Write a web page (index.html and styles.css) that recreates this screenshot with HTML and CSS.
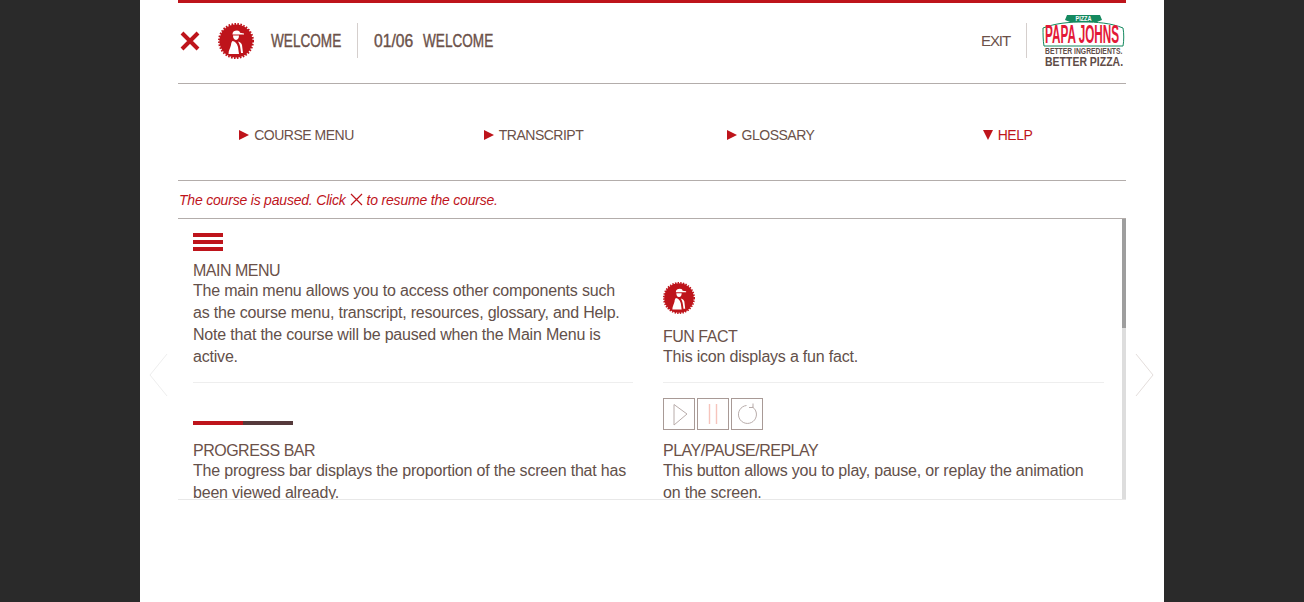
FILE: index.html
```html
<!DOCTYPE html>
<html lang="en">
<head>
    <meta charset="UTF-8">
    <meta name="viewport" content="width=device-width, initial-scale=1.0">
    <title>Welcome</title>
    <link rel="stylesheet" href="styles.css">
</head>
<body>
    <svg class="defs" width="0" height="0">
        <symbol id="pizza-badge" viewBox="0 0 36 36">
            <circle cx="18" cy="18" r="16.6" fill="#be141b"/>
            <circle cx="18" cy="18" r="17" fill="none" stroke="#be141b" stroke-width="2" stroke-dasharray="1.6 1.4"/>
            <path d="M14.5 11 C14.5 8.5 16.5 7.5 19 7.5 C21 7.5 22 8.5 22 9.8 L26 10.5 V11.6 H14.5 Z" fill="#fff"/>
            <path d="M15 12.6 H21 C21 15 20 17 18 17 C16 17 15 15 15 12.6 Z" fill="#fff"/>
            <path d="M14.5 18 C17 18.5 19 20 20 24 L21 31 H10.5 C10.5 27 12.5 25 13 22 C13.2 20 13.5 19 14.5 18 Z" fill="#fff"/>
            <path d="M20 18.5 C22 19 23.5 20 24 22 L25 30 H23 C22.5 25 22 21 20 18.5 Z" fill="#fff"/>
        </symbol>
    </svg>

    <div class="stage">
        <svg class="side-arrow side-arrow-left" width="20" height="44" viewBox="0 0 20 44"><path d="M18 1 L1 22 L18 43" fill="none" stroke="#eeeeee" stroke-width="1"/></svg>
        <svg class="side-arrow side-arrow-right" width="20" height="44" viewBox="0 0 20 44"><path d="M1 1 L18 22 L1 43" fill="none" stroke="#e4dedc" stroke-width="1"/></svg>

        <header class="top-bar">
            <svg class="close-icon" width="20" height="20" viewBox="0 0 20 20"><path d="M2 2 L18 18 M18 2 L2 18" stroke="#be141b" stroke-width="4" fill="none"/></svg>
            <svg class="badge" width="36" height="36"><use href="#pizza-badge"/></svg>
            <div class="module-name"><span class="narrow">WELCOME</span></div>
            <div class="screen-name">
                <span class="screen-num">01/06</span>
                <span class="narrow">WELCOME</span>
            </div>
            <a class="exit-link">EXIT</a>
            <svg class="logo" width="86" height="54" viewBox="0 0 86 54">
                <path d="M1 15 C14 10 28 9 41 9 C55 9 69 10 81 15 C82 20 82 28 81 33 H2 C1 28 1 20 1 15 Z" fill="#fff" stroke="#14895f" stroke-width="1"/>
                <path d="M25 2 H58 L60 7 L55 9 H28 L23 7 Z" fill="#14895f"/>
                <g transform="translate(41.5 7.5) scale(0.8 1)"><text class="logo-pizza" text-anchor="middle">PIZZA</text></g>
                <g transform="translate(3 30) scale(0.47 1)"><text class="logo-name">PAPA JOHNS</text></g>
                <g transform="translate(3 41) scale(0.8 1)"><text class="logo-tag">BETTER INGREDIENTS.</text></g>
                <g transform="translate(3 53) scale(0.84 1)"><text class="logo-line">BETTER PIZZA.</text></g>
            </svg>
        </header>

        <nav class="main-nav">
            <a class="nav-item"><i class="tri"></i>COURSE MENU</a>
            <a class="nav-item"><i class="tri"></i>TRANSCRIPT</a>
            <a class="nav-item"><i class="tri"></i>GLOSSARY</a>
            <a class="nav-item nav-item-active"><i class="tri-down"></i>HELP</a>
        </nav>

        <p class="paused-note">The course is paused. Click
            <svg width="13" height="13" viewBox="0 0 13 13"><path d="M1 1 L12 12 M12 1 L1 12" stroke="#be141b" stroke-width="1.2" fill="none"/></svg>
            to resume the course.</p>

        <div class="help-panel">
            <div class="help-scroll">
                <section class="help-row">
                    <div class="help-cell">
                        <div class="menu-icon"><i></i><i></i><i></i></div>
                        <h3>MAIN MENU</h3>
                        <p>The main menu allows you to access other components such as the course menu, transcript, resources, glossary, and Help. Note that the course will be paused when the Main Menu is active.</p>
                    </div>
                    <div class="help-cell">
                        <svg class="fact-icon" width="32" height="32"><use href="#pizza-badge"/></svg>
                        <h3>FUN FACT</h3>
                        <p>This icon displays a fun fact.</p>
                    </div>
                </section>
                <section class="help-row">
                    <div class="help-cell">
                        <div class="progress-sample"><i></i></div>
                        <h3>PROGRESS BAR</h3>
                        <p>The progress bar displays the proportion of the screen that has been viewed already.</p>
                    </div>
                    <div class="help-cell">
                        <div class="player-btns">
                            <span class="player-btn"><svg width="30" height="30" viewBox="0 0 30 30"><path d="M10 5.5 L23 15 L10 26 Z" fill="none" stroke="#b8acaa"/></svg></span>
                            <span class="player-btn"><svg width="30" height="30" viewBox="0 0 30 30"><path d="M11.5 5 V25 M18.5 5 V25" fill="none" stroke="#f6c4bc" stroke-width="1.4"/></svg></span>
                            <span class="player-btn"><svg width="30" height="30" viewBox="0 0 30 30"><path d="M20.5 8 A9 9 0 1 1 14.5 6.5" fill="none" stroke="#b8acaa"/><path d="M21 4.5 V8.5 H17" fill="none" stroke="#b8acaa"/></svg></span>
                        </div>
                        <h3>PLAY/PAUSE/REPLAY</h3>
                        <p>This button allows you to play, pause, or replay the animation on the screen.</p>
                    </div>
                </section>
            </div>
            <div class="scroll-track"><div class="scroll-thumb"></div></div>
        </div>
    </div>
</body>
</html>
```
FILE: styles.css
```css
body {
    margin: 0;
    height: 100vh;
    overflow: hidden;
    display: flex;
    justify-content: center;
    background-color: #2a2a2a;
    font-family: "Liberation Sans", Arial, sans-serif;
    color: #63504a;
}
.defs {
    position: absolute;
}
.stage {
    position: relative;
    width: 948px;
    padding: 0 38px;
    background-color: #fff;
}
.side-arrow {
    position: absolute;
    top: 353px;
}
.side-arrow-left {
    left: 9px;
}
.side-arrow-right {
    right: 9px;
}
.top-bar {
    display: flex;
    align-items: center;
    height: 80px;
    border-top: 3px solid #be141b;
    border-bottom: 1px solid #b3adab;
}
.close-icon {
    margin: -5px 18px 0 2px;
}
.badge {
    margin-top: -5px;
    margin-right: 17px;
}
/* no condensed face installed, so squeeze the regular one */
.narrow, .screen-num {
    display: inline-block;
    transform-origin: left center;
    transform: scaleX(0.755);
    -webkit-text-stroke: 0.4px #6b5149;
}
.screen-num {
    width: 49px;
    transform: scaleX(0.87);
}
.module-name, .screen-name {
    font-size: 18px;
    color: #6b5149;
    margin-top: -5px;
}
.module-name {
    width: 86px;
    line-height: 35px;
    white-space: nowrap;
    border-right: 1px solid #d5cfcd;
}
.module-name .narrow, .screen-name span {
    position: relative;
    top: 1px;
}
.screen-name {
    display: flex;
    margin-left: 16px;
    flex: 1;
}
.exit-link {
    font-size: 15px;
    letter-spacing: -1.1px;
    color: #6b5149;
    width: 45px;
    line-height: 35px;
    border-right: 1px solid #d5cfcd;
    margin-top: -5px;
}
.logo {
    margin: -7px -2px 0 15px;
    align-self: center;
}
.logo text {
    font-weight: bold;
}
.logo-pizza {
    font-size: 7px;
    fill: #fff;
}
.logo-name {
    font-size: 25px;
    fill: #e31837;
}
.logo-tag {
    font-size: 8.5px;
    fill: #5f4c47;
}
.logo-line {
    font-size: 12.5px;
    fill: #5f4c47;
}
.main-nav {
    display: grid;
    grid-template-columns: repeat(4, 1fr);
    align-items: center;
    height: 90px;
    padding-top: 6px;
    border-bottom: 1px solid #b3adab;
}
.nav-item {
    display: flex;
    justify-content: center;
    align-items: center;
    gap: 5px;
    font-size: 14px;
    letter-spacing: -0.5px;
    color: #6b5149;
}
.nav-item-active {
    color: #be141b;
}
.tri {
    border-left: 10px solid #be141b;
    border-top: 5px solid transparent;
    border-bottom: 5px solid transparent;
}
.tri-down {
    border-top: 10px solid #be141b;
    border-left: 5.5px solid transparent;
    border-right: 5.5px solid transparent;
}
.paused-note {
    margin: 0;
    height: 37px;
    padding-left: 1px;
    display: flex;
    align-items: center;
    gap: 4px;
    font-size: 14px;
    font-style: italic;
    letter-spacing: -0.2px;
    color: #be141b;
}
.help-panel {
    display: flex;
    height: 280px;
    border-top: 1px solid #b3adab;
    border-bottom: 1px solid #e8e8e8;
}
.help-scroll {
    flex: 1;
    overflow: hidden;
}
.help-row {
    display: grid;
    grid-template-columns: 440px 441px;
    column-gap: 30px;
    padding-left: 15px;
}
.help-cell {
    display: flex;
    flex-direction: column;
    justify-content: flex-end;
}
.help-row:first-child .help-cell {
    height: 163px;
    border-bottom: 1px solid #eeeeee;
}
.help-row:last-child .help-cell {
    height: 135px;
    justify-content: flex-start;
}
.help-cell h3 {
    margin: 0;
    font-size: 16px;
    font-weight: normal;
    line-height: 20px;
    letter-spacing: -0.5px;
    color: #6b5149;
}
.help-cell p {
    margin: -1px 0 14px;
    font-size: 16px;
    line-height: 22px;
    letter-spacing: -0.2px;
}
.menu-icon {
    display: flex;
    flex-direction: column;
    gap: 3px;
    width: 30px;
    margin-bottom: 10px;
}
.menu-icon i {
    height: 4px;
    background-color: #be141b;
}
.fact-icon {
    margin-bottom: 13px;
}
.progress-sample {
    flex: none;
    width: 100px;
    height: 4px;
    margin: 38px 0 16px;
    background-color: #55393b;
}
.progress-sample i {
    display: block;
    width: 50%;
    height: 100%;
    background-color: #be141b;
}
.player-btns {
    display: flex;
    gap: 2px;
    margin: 15px 0 11px;
}
.player-btn {
    display: block;
    width: 30px;
    height: 30px;
    border: 1px solid #a89a96;
}
.player-btn svg {
    display: block;
}
.scroll-track {
    width: 4px;
    background-color: #dddddd;
}
.scroll-thumb {
    height: 109px;
    background-color: #9e9e9e;
}
```
